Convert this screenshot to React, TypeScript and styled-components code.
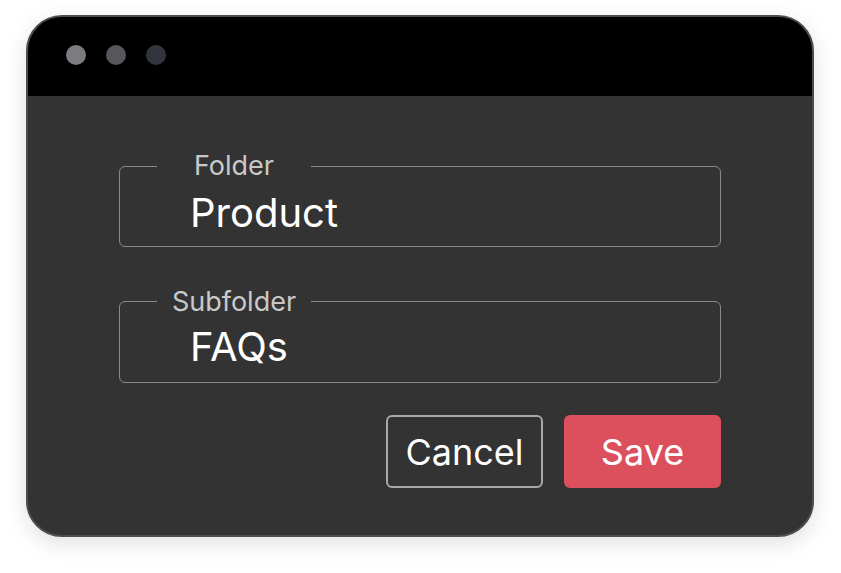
import * as React from "react";
import styled, { createGlobalStyle } from "styled-components";

const GlobalStyle = createGlobalStyle`
  html, body {
    margin: 0;
    padding: 0;
    background: #ffffff;
  }
  body {
    font-family: Inter, "Noto Sans", sans-serif;
  }
`;

const Page = styled.div`
  width: 841px;
  height: 573px;
  padding: 15px 0 0 26px;
  box-sizing: border-box;
`;

const Window = styled.div`
  width: 788px;
  height: 522px;
  box-sizing: border-box;
  border: 2px solid #4d4d50;
  border-radius: 36px;
  background: #333333;
  overflow: hidden;
  box-shadow: 0 6px 22px rgba(0, 0, 0, 0.13);
  display: flex;
  flex-direction: column;
`;

const TitleBar = styled.div`
  height: 79px;
  background: #000;
  display: flex;
  align-items: flex-start;
  gap: 20px;
  padding: 28px 0 0 38px;
  box-sizing: border-box;
  flex-shrink: 0;
`;

const Dot = styled.span<{ $color: string }>`
  width: 20px;
  height: 20px;
  border-radius: 50%;
  background: ${(p) => p.$color};
`;

const Body = styled.div`
  padding: 55px 91px 0 91px;
  display: flex;
  flex-direction: column;
`;

const Field = styled.fieldset<{ $padTop: number; $padBottom: number }>`
  margin: 0 0 40px 0;
  padding: ${(p) => `${p.$padTop}px 0 ${p.$padBottom}px 0`};
  border: 1.5px solid #8a8a8a;
  border-radius: 6px;
  min-width: 0;
`;

const Legend = styled.legend`
  width: 154px;
  margin-left: 37px;
  padding: 0;
  font-size: 27px;
  line-height: 30px;
  color: #c9c9c9;
`;

const LegendText = styled.span`
  display: block;
  text-align: center;
`;

const Value = styled.div`
  padding-left: 70px;
  font-size: 40px;
  line-height: 48px;
  color: #ffffff;
`;

const Actions = styled.div`
  display: flex;
  justify-content: flex-end;
  gap: 21px;
  margin-top: -8px;
`;

const ActionButton = styled.button<{ $primary?: boolean }>`
  width: 157px;
  height: 73px;
  padding: 0;
  box-sizing: border-box;
  border-radius: 6px;
  font-family: Inter, "Noto Sans", sans-serif;
  font-size: 36px;
  color: #ffffff;
  cursor: pointer;
  border: ${(p) => (p.$primary ? "none" : "2px solid #a9a9a9")};
  background: ${(p) => (p.$primary ? "#dc505d" : "transparent")};
`;

export default function App() {
  return (
    <>
      <GlobalStyle />
      <Page>
        <Window>
          <TitleBar>
            <Dot $color="#7b7c80" />
            <Dot $color="#55575c" />
            <Dot $color="#32353b" />
          </TitleBar>
          <Body>
            <Field $padTop={8} $padBottom={8.5}>
              <Legend>
                <LegendText>Folder</LegendText>
              </Legend>
              <Value>Product</Value>
            </Field>
            <Field $padTop={6} $padBottom={11.5}>
              <Legend>
                <LegendText>Subfolder</LegendText>
              </Legend>
              <Value>FAQs</Value>
            </Field>
            <Actions>
              <ActionButton type="button">Cancel</ActionButton>
              <ActionButton type="button" $primary>
                Save
              </ActionButton>
            </Actions>
          </Body>
        </Window>
      </Page>
    </>
  );
}
